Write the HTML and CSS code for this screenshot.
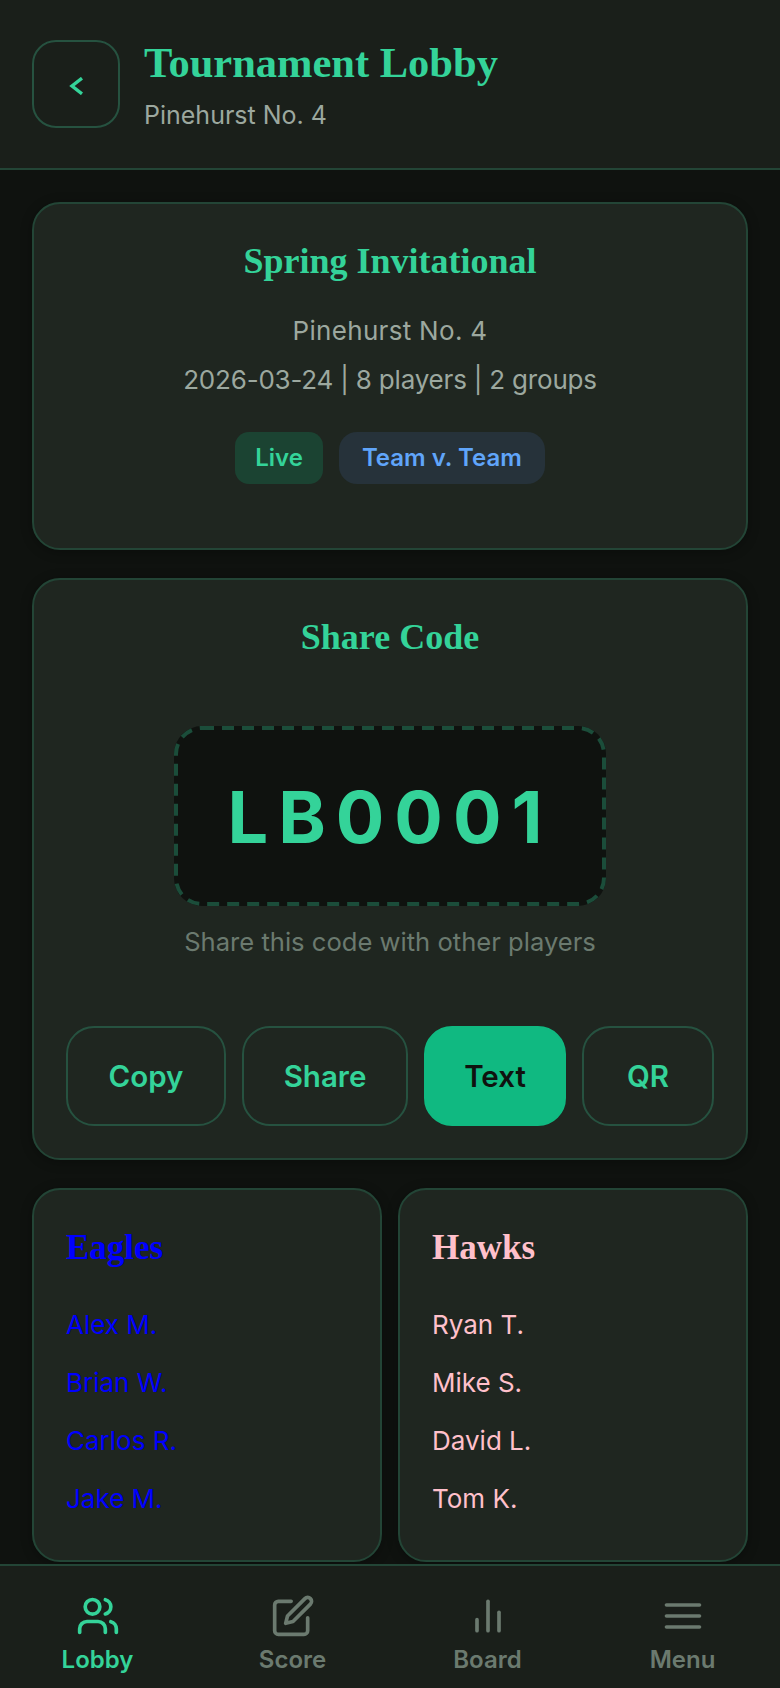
FILE: index.html
```html
<!DOCTYPE html>
<html lang="en">
<head>
  <meta charset="UTF-8">
  <meta name="viewport" content="width=device-width, initial-scale=1.0">
  <title>Tournament Lobby</title>
  <link rel="stylesheet" href="styles.css">
</head>
<body>
  <header class="topbar">
    <button class="back-btn" aria-label="Back">
      <svg class="back-icon" viewBox="0 0 14 18"><polyline points="13,1.2 3,9 13,16.8"/></svg>
    </button>
    <div class="topbar-text">
      <h1>Tournament Lobby</h1>
      <p>Pinehurst No. 4</p>
    </div>
  </header>

  <main class="content">
    <section class="card info-card">
      <h2>Spring Invitational</h2>
      <p class="info-line">Pinehurst No. 4</p>
      <p class="info-line info-date">2026-03-24 | 8 players | 2 groups</p>
      <div class="pills">
        <span class="pill pill-live">Live</span>
        <span class="pill pill-mode">Team v. Team</span>
      </div>
    </section>

    <section class="card share-card">
      <h2>Share Code</h2>
      <div class="code-box">
        <!-- dashed outline, drawn so the dash length can be set -->
        <svg class="code-outline" viewBox="0 0 432 180"><rect x="2" y="2" width="428" height="176" rx="26"/></svg>
        LB0001
      </div>
      <p class="code-hint">Share this code with other players</p>
      <div class="share-actions">
        <button class="action">Copy</button>
        <button class="action">Share</button>
        <button class="action action-primary">Text</button>
        <button class="action">QR</button>
      </div>
    </section>

    <div class="teams">
      <section class="card team team-eagles">
        <h3>Eagles</h3>
        <ul>
          <li>Alex M.</li>
          <li>Brian W.</li>
          <li>Carlos R.</li>
          <li>Jake M.</li>
        </ul>
      </section>
      <section class="card team team-hawks">
        <h3>Hawks</h3>
        <ul>
          <li>Ryan T.</li>
          <li>Mike S.</li>
          <li>David L.</li>
          <li>Tom K.</li>
        </ul>
      </section>
    </div>
  </main>

  <nav class="tabbar">
    <a class="tab tab-active">
      <svg viewBox="0 0 24 24"><path d="M16 21v-2a4 4 0 0 0-4-4H6a4 4 0 0 0-4 4v2"/><circle cx="9" cy="7" r="4"/><path d="M22 21v-2a4 4 0 0 0-3-3.87"/><path d="M16 3.13a4 4 0 0 1 0 7.75"/></svg>
      <span>Lobby</span>
    </a>
    <a class="tab">
      <svg viewBox="0 0 24 24"><path d="M11 4H4a2 2 0 0 0-2 2v14a2 2 0 0 0 2 2h14a2 2 0 0 0 2-2v-7"/><path d="M18.5 2.5a2.121 2.121 0 0 1 3 3L12 15l-4 1 1-4 9.5-9.5z"/></svg>
      <span>Score</span>
    </a>
    <a class="tab">
      <svg viewBox="0 0 24 24"><line x1="18" y1="20" x2="18" y2="10"/><line x1="12" y1="20" x2="12" y2="4"/><line x1="6" y1="20" x2="6" y2="14"/></svg>
      <span>Board</span>
    </a>
    <a class="tab">
      <svg viewBox="0 0 24 24"><line x1="3" y1="12" x2="21" y2="12"/><line x1="3" y1="6" x2="21" y2="6"/><line x1="3" y1="18" x2="21" y2="18"/></svg>
      <span>Menu</span>
    </a>
  </nav>
</body>
</html>
```

FILE: styles.css
```css
* {
  box-sizing: border-box;
}
body {
  margin: 0;
  height: 1688px;
  overflow: hidden;
  display: flex;
  flex-direction: column;
  background-color: #0f120f;
  color: #e8ede9;
  font-family: "Inter", "Liberation Sans", sans-serif;
}
h1, h2, h3, p, ul {
  margin: 0;
  padding: 0;
}
h1, h2, h3 {
  font-family: "Liberation Serif", serif;
  font-weight: 700;
}

.topbar {
  display: flex;
  align-items: center;
  gap: 24px;
  height: 170px;
  padding: 0 32px;
  background-color: #1a1f1a;
  border-bottom: 2px solid #234536;
}
.back-btn {
  display: flex;
  align-items: center;
  justify-content: center;
  width: 88px;
  height: 88px;
  padding: 0;
  background: none;
  border: 2px solid #265240;
  border-radius: 24px;
}
.back-icon {
  width: 14px;
  height: 18px;
  margin-top: 4px;
  fill: none;
  stroke: #34d399;
  stroke-width: 3.4;
}
.topbar-text h1 {
  font-size: 42.5px;
  line-height: 52px;
  color: #34d399;
}
.topbar-text p {
  margin-top: 10px;
  font-size: 25px;
  line-height: 32px;
  color: #9ca89f;
}

.content {
  flex: 1;
  display: flex;
  flex-direction: column;
  gap: 28px;
  padding: 32px 32px 0;
}
.card {
  padding: 34px 32px 32px;
  background-color: #1f2620;
  border: 2px solid #234536;
  border-radius: 28px;
  box-shadow: 0 2px 12px rgba(0, 0, 0, 0.3);
}
.card h2 {
  font-size: 36px;
  line-height: 46px;
  text-align: center;
  color: #34d399;
}

.info-card {
  height: 348px;
}
.info-card h2 {
  margin-bottom: 28px;
}
.info-line {
  font-size: 26px;
  line-height: 37px;
  letter-spacing: 0.3px;
  text-align: center;
  color: #9ca89f;
}
.info-line + .info-line {
  margin-top: 12px;
}
.info-date {
  letter-spacing: -0.2px;
}
.pills {
  display: flex;
  justify-content: center;
  gap: 16px;
  margin-top: 34px;
}
.pill {
  padding: 0 20px;
  font-size: 24px;
  font-weight: 600;
  line-height: 52px;
  border-radius: 14px;
}
.pill-live {
  color: #34d399;
  background-color: #1b4332;
}
.pill-mode {
  padding: 0 23px;
  border-radius: 18px;
  color: #60a5fa;
  background-color: #26323a;
}

.share-card {
  display: flex;
  flex-direction: column;
  align-items: center;
  height: 582px;
}
.code-box {
  position: relative;
  display: flex;
  align-items: center;
  justify-content: center;
  width: 432px;
  height: 180px;
  margin-top: 66px;
  font-size: 72px;
  font-weight: 700;
  letter-spacing: 10px;
  color: #34d399;
  background-color: #0f120f;
  border-radius: 28px;
}
.code-outline {
  position: absolute;
  inset: 0;
  width: 100%;
  height: 100%;
  fill: none;
  stroke: #1b4d3a;
  stroke-width: 4;
  stroke-dasharray: 12 8;
}
.code-hint {
  margin-top: 20px;
  font-size: 25.6px;
  line-height: 32px;
  color: #6b7a6f;
}
.share-actions {
  display: grid;
  grid-template-columns: 160fr 166fr 142fr 132fr;
  gap: 16px;
  width: 100%;
  margin-top: 68px;
}
.action {
  height: 100px;
  padding: 0;
  font-family: inherit;
  font-size: 29.5px;
  font-weight: 600;
  color: #34d399;
  background: none;
  border: 2px solid #265240;
  border-radius: 28px;
}
.action-primary {
  color: #0f120f;
  background-color: #10b981;
  border-color: #10b981;
}

.teams {
  display: grid;
  grid-template-columns: 1fr 1fr;
  gap: 16px;
}
.team {
  height: 374px;
  padding-top: 35px;
}
.team h3 {
  font-size: 35px;
  line-height: 46px;
}
.team ul {
  list-style: none;
  margin-top: 25px;
}
.team li {
  font-size: 26px;
  line-height: 58px;
}
.team-eagles {
  color: #0000ff;
}
.team-hawks {
  color: #ffc0cb;
}

.tabbar {
  display: grid;
  grid-template-columns: repeat(4, 1fr);
  height: 124px;
  padding-top: 28px;
  background-color: #1a1f1a;
  border-top: 2px solid #234536;
}
.tab {
  display: flex;
  flex-direction: column;
  align-items: center;
  gap: 6px;
  font-size: 24px;
  font-weight: 600;
  line-height: 32px;
  color: #6b7a6f;
}
.tab svg {
  width: 44px;
  height: 44px;
  fill: none;
  stroke: currentColor;
  stroke-width: 2;
  stroke-linecap: round;
  stroke-linejoin: round;
}
.tab-active {
  color: #34d399;
}
```
